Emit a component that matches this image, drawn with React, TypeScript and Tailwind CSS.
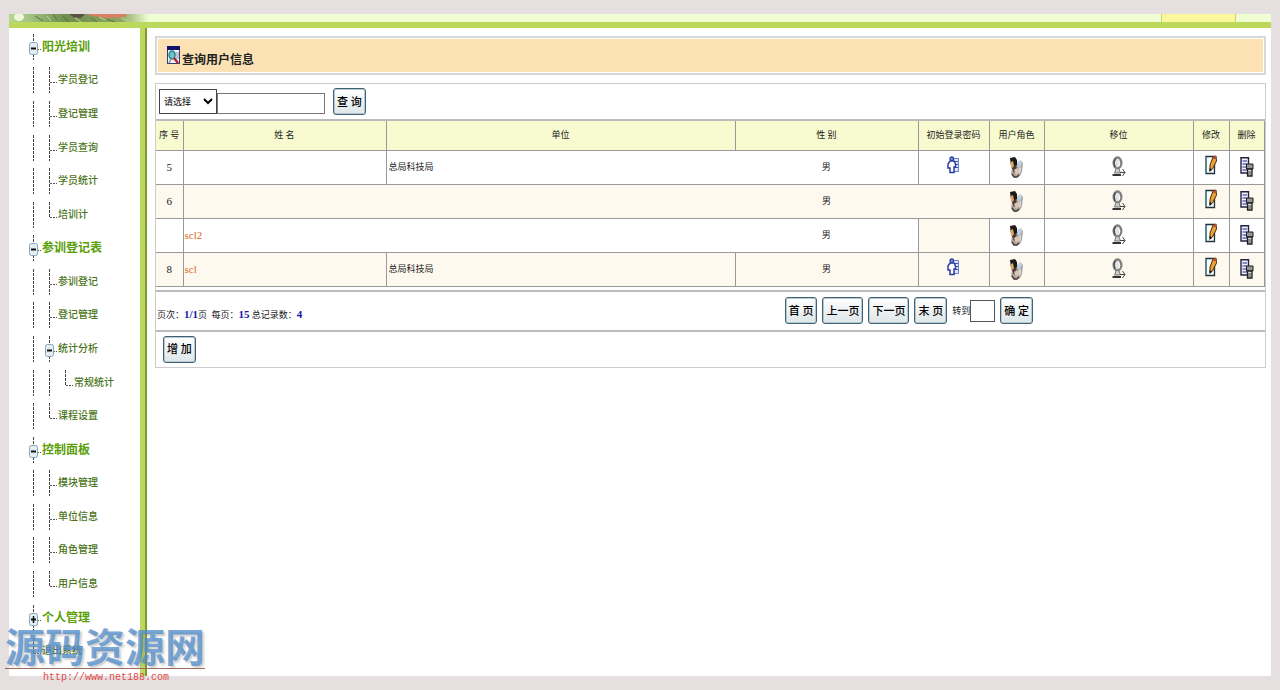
import React from 'react';

type NodeKind = 'open' | 'closed' | 'branch' | 'end';

interface MenuItem {
  label: string;
  kind: NodeKind;
  depth: number;
  heading?: boolean;
}

interface UserRow {
  no: string;
  name: string;
  unit: string;
  sex: string;
  password: boolean;
  // columns that have no divider on their right side
  open: number[];
}

const MENU: MenuItem[] = [
  { label: '阳光培训', kind: 'open', depth: 0, heading: true },
  { label: '学员登记', kind: 'branch', depth: 1 },
  { label: '登记管理', kind: 'branch', depth: 1 },
  { label: '学员查询', kind: 'branch', depth: 1 },
  { label: '学员统计', kind: 'branch', depth: 1 },
  { label: '培训计', kind: 'end', depth: 1 },
  { label: '参训登记表', kind: 'open', depth: 0, heading: true },
  { label: '参训登记', kind: 'branch', depth: 1 },
  { label: '登记管理', kind: 'branch', depth: 1 },
  { label: '统计分析', kind: 'open', depth: 1 },
  { label: '常规统计', kind: 'end', depth: 2 },
  { label: '课程设置', kind: 'end', depth: 1 },
  { label: '控制面板', kind: 'open', depth: 0, heading: true },
  { label: '模块管理', kind: 'branch', depth: 1 },
  { label: '单位信息', kind: 'branch', depth: 1 },
  { label: '角色管理', kind: 'branch', depth: 1 },
  { label: '用户信息', kind: 'end', depth: 1 },
  { label: '个人管理', kind: 'closed', depth: 0, heading: true },
  { label: '退出系统', kind: 'end', depth: 0 },
];

const COLUMNS = [
  { title: '序 号', width: 'w-[27px]' },
  { title: '姓 名', width: 'w-[203px]' },
  { title: '单位', width: 'w-[349px]' },
  { title: '性 别', width: 'w-[183px]' },
  { title: '初始登录密码', width: 'w-[71px]' },
  { title: '用户角色', width: 'w-[55px]' },
  { title: '移位', width: 'w-[149px]' },
  { title: '修改', width: 'w-[36px]' },
  { title: '删除', width: 'w-[35px]' },
];

const USERS: UserRow[] = [
  { no: '5', name: '', unit: '总局科技局', sex: '男', password: true, open: [2] },
  { no: '6', name: '', unit: '', sex: '男', password: false, open: [1, 2, 3, 4] },
  { no: '', name: 'scl2', unit: '', sex: '男', password: false, open: [1, 2] },
  { no: '8', name: 'scl', unit: '总局科技局', sex: '男', password: true, open: [] },
];

const Guide: React.FC<{ kind: NodeKind | 'line' }> = ({ kind }) => {
  const box = kind === 'open' || kind === 'closed';
  return (
    <svg width="16" height="26" viewBox="0 0 16 26" className="shrink-0" aria-hidden="true">
      <path
        d={kind === 'end' ? 'M7.5 0V15' : 'M7.5 0V26'}
        stroke="#444"
        strokeDasharray="3 1"
        fill="none"
      />
      {kind !== 'line' && <path d="M8 15.5H15" stroke="#555" strokeDasharray="2 1" />}
      {box && (
        <>
          <rect x="3.5" y="8.5" width="8" height="12" rx="2" fill="#e3edf4" stroke="#8ba5b8" />
          <path d="M5 14.5H10" stroke="#111" strokeWidth="2" />
          {kind === 'closed' && <path d="M7.5 11V18" stroke="#111" strokeWidth="1.5" />}
        </>
      )}
    </svg>
  );
};

const SearchIcon = () => (
  <svg width="13" height="19" viewBox="0 0 13 19" aria-hidden="true">
    <rect x="0.5" y="0.5" width="12" height="17" fill="#eef3f6" stroke="#34406e" />
    <path d="M0 0H13V4H0Z" fill="#10106e" />
    <path d="M7 6H12V13H9Z" fill="#b9c6d8" />
    <ellipse cx="5" cy="9" rx="3" ry="4" fill="#6fc5c5" stroke="#267c84" strokeWidth="1.3" />
    <path d="M7 12L11 17" stroke="#b4232c" strokeWidth="2.4" />
    <path d="M2 17L4 13" stroke="#8a8f96" strokeWidth="1.4" />
  </svg>
);

const PasswordIcon = () => (
  <svg width="13" height="18" viewBox="0 0 13 18" aria-hidden="true">
    <path d="M6 2.5H11.5V15.5H6" fill="#dfe5fa" stroke="#6a7fcd" />
    <path d="M7.5 5.5H11M8 8.5H11M8 11.5H11" stroke="#4156b5" />
    <path d="M3 5H7L8.500 8V11H7V16.500H3V12H1V8Z" fill="#fff" stroke="#2b3d9e" strokeWidth="1.5" />
    <circle cx="4.800" cy="2.800" r="1.800" fill="#8c9bd6" stroke="#2b3d9e" strokeWidth="1.3" />
  </svg>
);

const RoleIcon = () => (
  <svg width="13" height="21" viewBox="0 0 13 21" aria-hidden="true">
    <path d="M6 8L11 4L13 6L12 15L10 19L5 21L1 17L2 11Z" fill="#aaa29f" />
    <path d="M0 1L5 0L7 3L7 8L4 10L1 9Z" fill="#1d1a18" />
    <path d="M1 5L3 4L4 9L2 12L1 10Z" fill="#e0a860" />
    <path d="M7 5L11 3L12 7L8 11Z" fill="#bcd2e0" />
    <path d="M2 11L6 8L7 12L4 16Z" fill="#4a3d38" />
    <path d="M4 13L7 11L9 15L6 18Z" fill="#e0c6ac" />
    <path d="M8 12L11 9L11 15L9 17Z" fill="#d6d3d3" />
    <path d="M2 17L4 20H7L9 18" stroke="#4b3c37" strokeWidth="1.5" fill="none" />
  </svg>
);

const MoveIcon = () => (
  <svg width="14" height="22" viewBox="0 0 14 22" aria-hidden="true">
    <ellipse cx="5.500" cy="7" rx="3.800" ry="5.500" fill="#e2e2e2" stroke="#808080" strokeWidth="2.400" />
    <path d="M3.500 2.500L2 6L3 11" stroke="#4d4d4d" strokeWidth="1.300" fill="none" />
    <path d="M6 5L8 7L7 10" stroke="#fff" fill="none" />
    <path d="M4 13L2.500 17H8.500L7 13" fill="#ccc" stroke="#777" />
    <path d="M0.500 19H9" stroke="#333" strokeWidth="2" />
    <path d="M8 16.500H13M10.500 13L13 16.500L10.500 20" stroke="#444" fill="none" />
  </svg>
);

const EditIcon = () => (
  <svg width="12" height="20" viewBox="0 0 12 20" aria-hidden="true">
    <path d="M1 1.500H9.500V18.500H1Z" fill="#f6fbfb" stroke="#22333b" strokeWidth="1.300" />
    <path d="M1 2V18" stroke="#4a93a3" />
    <path d="M8 2L11 1L11.500 6L7.500 14L5 16L5 10Z" fill="#eba235" stroke="#4b2d12" />
    <path d="M8 2L11 1L11.500 4L8.500 4Z" fill="#b8502c" />
    <path d="M4.500 13V17L7 14.500Z" fill="#111" />
  </svg>
);

const DeleteIcon = () => (
  <svg width="14" height="20" viewBox="0 0 14 20" aria-hidden="true">
    <path d="M1 0.700H8.500V16H1Z" fill="#f2f2fc" stroke="#22223e" strokeWidth="1.400" />
    <path d="M2.500 4H7M2.500 7H7M2.500 10H7M2.500 13H7" stroke="#6565bd" strokeWidth="1.500" />
    <path d="M6.500 7H13V12H6.500Z" fill="#969696" stroke="#1f1f1f" />
    <path d="M7.500 12H12V19H7.500Z" fill="#ddd" stroke="#1f1f1f" strokeWidth="1.300" />
    <path d="M8 15H12M8 17H12" stroke="#444" />
  </svg>
);

const BannerArt = () => (
  <svg viewBox="0 0 140 8" preserveAspectRatio="none" className="h-2 w-[140px]" aria-hidden="true">
    <defs>
      <linearGradient id="grass">
        <stop offset="0" stopColor="#b5d88d" />
        <stop offset="0.15" stopColor="#a2c384" />
        <stop offset="0.4" stopColor="#6f8e50" />
        <stop offset="0.8" stopColor="#8da564" />
        <stop offset="1" stopColor="#efffd3" />
      </linearGradient>
    </defs>
    <rect width="140" height="8" fill="url(#grass)" />
    <ellipse cx="10" cy="3" rx="5" ry="4" fill="#eef8dc" />
    <path d="M60 0H76L72 4L64 3Z" fill="#5a5244" />
    <path d="M76 0H118L116 3L98 4L84 2Z" fill="#db7f61" />
    <path d="M26 2L34 7M44 0L48 6M54 2L60 8M82 4L88 8M98 5L106 8" stroke="#56783b" />
    <path d="M38 2L42 7M66 4L72 8M90 3L96 6M112 4L120 7" stroke="#b9d79b" />
  </svg>
);

const PushButton: React.FC<{ children: React.ReactNode }> = ({ children }) => (
  <button
    type="button"
    className="h-[27px] rounded-[3px] border border-[#3f6275] bg-gradient-to-b from-white to-[#dde6e8] px-[3px] text-[11px] font-medium leading-4 whitespace-nowrap text-black shadow-[inset_0_0_0_1px_#b9c8d0]"
  >
    {children}
  </button>
);

const IconButton: React.FC<{ label: string; children: React.ReactNode }> = ({ label, children }) => (
  <button type="button" aria-label={label} className="block mx-auto">
    {children}
  </button>
);

const Sidebar = () => (
  <nav className="flex w-[131px] shrink-0 flex-col bg-white pt-[2px] pb-2 pl-[17px]">
    <ul className="flex flex-1 flex-col">
      {MENU.map((item, index) => (
        <li key={index} className="flex flex-1 items-center">
          {Array.from({ length: item.depth }, (_, i) => (
            <Guide key={i} kind="line" />
          ))}
          <Guide kind={item.kind} />
          <a
            href="#"
            className={
              item.heading
                ? 'text-[12px] leading-4 font-bold whitespace-nowrap text-[#5a9e08]'
                : 'text-[10px] leading-4 font-medium whitespace-nowrap text-[#4b7420]'
            }
          >
            {item.label}
          </a>
        </li>
      ))}
    </ul>
  </nav>
);

const UserTable = () => (
  <table className="w-full table-fixed border-collapse text-center text-[9px] leading-4 text-[#222]">
    <thead>
      <tr className="h-[29px] border-b border-[#999] bg-[#f7fbcf]">
        {COLUMNS.map((col) => (
          <th
            key={col.title}
            className={`${col.width} border-r border-[#999] p-0 font-normal whitespace-nowrap`}
          >
            {col.title}
          </th>
        ))}
      </tr>
    </thead>
    <tbody>
      {USERS.map((user, rowIndex) => {
        const cells = [
          user.no,
          <a href="#" className="block pl-px text-left text-[11px] text-[#dd6a22]">{user.name}</a>,
          <span className="block pl-[2px] text-left">{user.unit}</span>,
          user.sex,
          user.password && <IconButton label="初始登录密码"><PasswordIcon /></IconButton>,
          <IconButton label="用户角色"><RoleIcon /></IconButton>,
          <IconButton label="移位"><MoveIcon /></IconButton>,
          <IconButton label="修改"><EditIcon /></IconButton>,
          <IconButton label="删除"><DeleteIcon /></IconButton>,
        ];
        return (
          <tr
            key={rowIndex}
            className={`h-[34px] border-b border-[#999] ${rowIndex % 2 ? 'bg-[#fdf9ee]' : 'bg-white'}`}
          >
            {cells.map((cell, i) => (
              <td
                key={i}
                className={`p-0 ${user.open.includes(i) ? '' : 'border-r border-[#999]'} ${
                  rowIndex === 2 && i === 4 ? 'bg-[#fdf9ee]' : ''
                } ${i === 0 ? 'text-[11px]' : ''} ${i === 4 || i === 7 ? 'pb-1' : ''}`}
              >
                {cell}
              </td>
            ))}
          </tr>
        );
      })}
    </tbody>
  </table>
);

const Pager = () => (
  <div className="flex h-[42px] items-center border-y-2 border-[#bbb] text-[9px] leading-4 text-[#222]">
    <p className="pt-2 pl-px whitespace-nowrap">
      页次：<b className="text-[11px] text-[#1515a8]">1/1</b>页&nbsp; 每页：
      <b className="text-[11px] text-[#1515a8]">15</b> 总记录数：
      <b className="text-[11px] text-[#1515a8]">4</b>
    </p>
    <div className="mr-[232px] ml-auto flex items-center gap-[5px]">
      <PushButton>首 页</PushButton>
      <PushButton>上一页</PushButton>
      <PushButton>下一页</PushButton>
      <PushButton>末 页</PushButton>
      <label className="flex items-center whitespace-nowrap">
        转到
        <input type="text" className="h-[22px] w-[25px] border border-[#555] bg-white" />
      </label>
      <PushButton>确 定</PushButton>
    </div>
  </div>
);

const Watermark = () => (
  <div className="pointer-events-none absolute bottom-1 left-[5px] w-[200px] whitespace-nowrap">
    <div className="border-b border-[#a06a5a] font-['Noto_Sans_CJK_SC',sans-serif] text-[40px] leading-[46px] font-bold text-[#4f8ccb]/75 [text-shadow:2px_2px_2px_rgba(120,120,120,0.35)]">
      源码资源网
    </div>
    <div className="pl-[38px] font-['Liberation_Mono',monospace] text-[10px] leading-[17px] text-[#e04848]">
      http://www.net188.com
    </div>
  </div>
);

export default function App() {
  return (
    <div className="relative flex min-h-screen flex-col bg-[#e6dfe0] px-[9px] py-[14px] font-['Liberation_Serif','Noto_Sans_CJK_SC',serif]">
      <header className="flex h-[14px] shrink-0 border-b-[6px] border-[#bdd95d] bg-[#efffd3]">
        <BannerArt />
        <div className="mr-[35px] ml-auto w-[75px] border-x border-[#c3d566] bg-[#fbf79b]" />
      </header>

      <div className="flex flex-1 bg-white">
        <Sidebar />
        <div className="w-[7px] shrink-0 border-r-2 border-[#7f9a35] bg-[#bdd95d]" />

        <main className="min-w-0 flex-1 pt-2 pr-[5px] pl-2">
          <div className="border-2 border-[#d8d8d8] p-px">
            <h1 className="flex h-[33px] items-center gap-[2px] bg-[#fbe1b3] pl-[9px] text-[12px] leading-4 font-bold text-[#222]">
              <SearchIcon />
              <span className="pt-2">查询用户信息</span>
            </h1>
          </div>

          <section className="mt-2 border border-[#ccc]">
            <form className="flex h-[35px] items-center pl-[3px]" onSubmit={(e) => e.preventDefault()}>
              <select
                aria-label="查询条件"
                className="h-[25px] w-[58px] border border-[#444] bg-white text-[9px] text-black"
              >
                <option>请选择</option>
              </select>
              <input
                type="text"
                aria-label="关键字"
                className="mt-1 mr-2 h-[21px] w-[108px] border border-[#777] bg-white"
              />
              <PushButton>查 询</PushButton>
            </form>
            <div className="border-t-2 border-[#bbb] pr-[2px] pb-[3px]">
              <UserTable />
            </div>
            <Pager />
            <div className="flex h-[35px] items-center pl-[7px]">
              <PushButton>增 加</PushButton>
            </div>
          </section>
        </main>
      </div>

      <Watermark />
    </div>
  );
}
